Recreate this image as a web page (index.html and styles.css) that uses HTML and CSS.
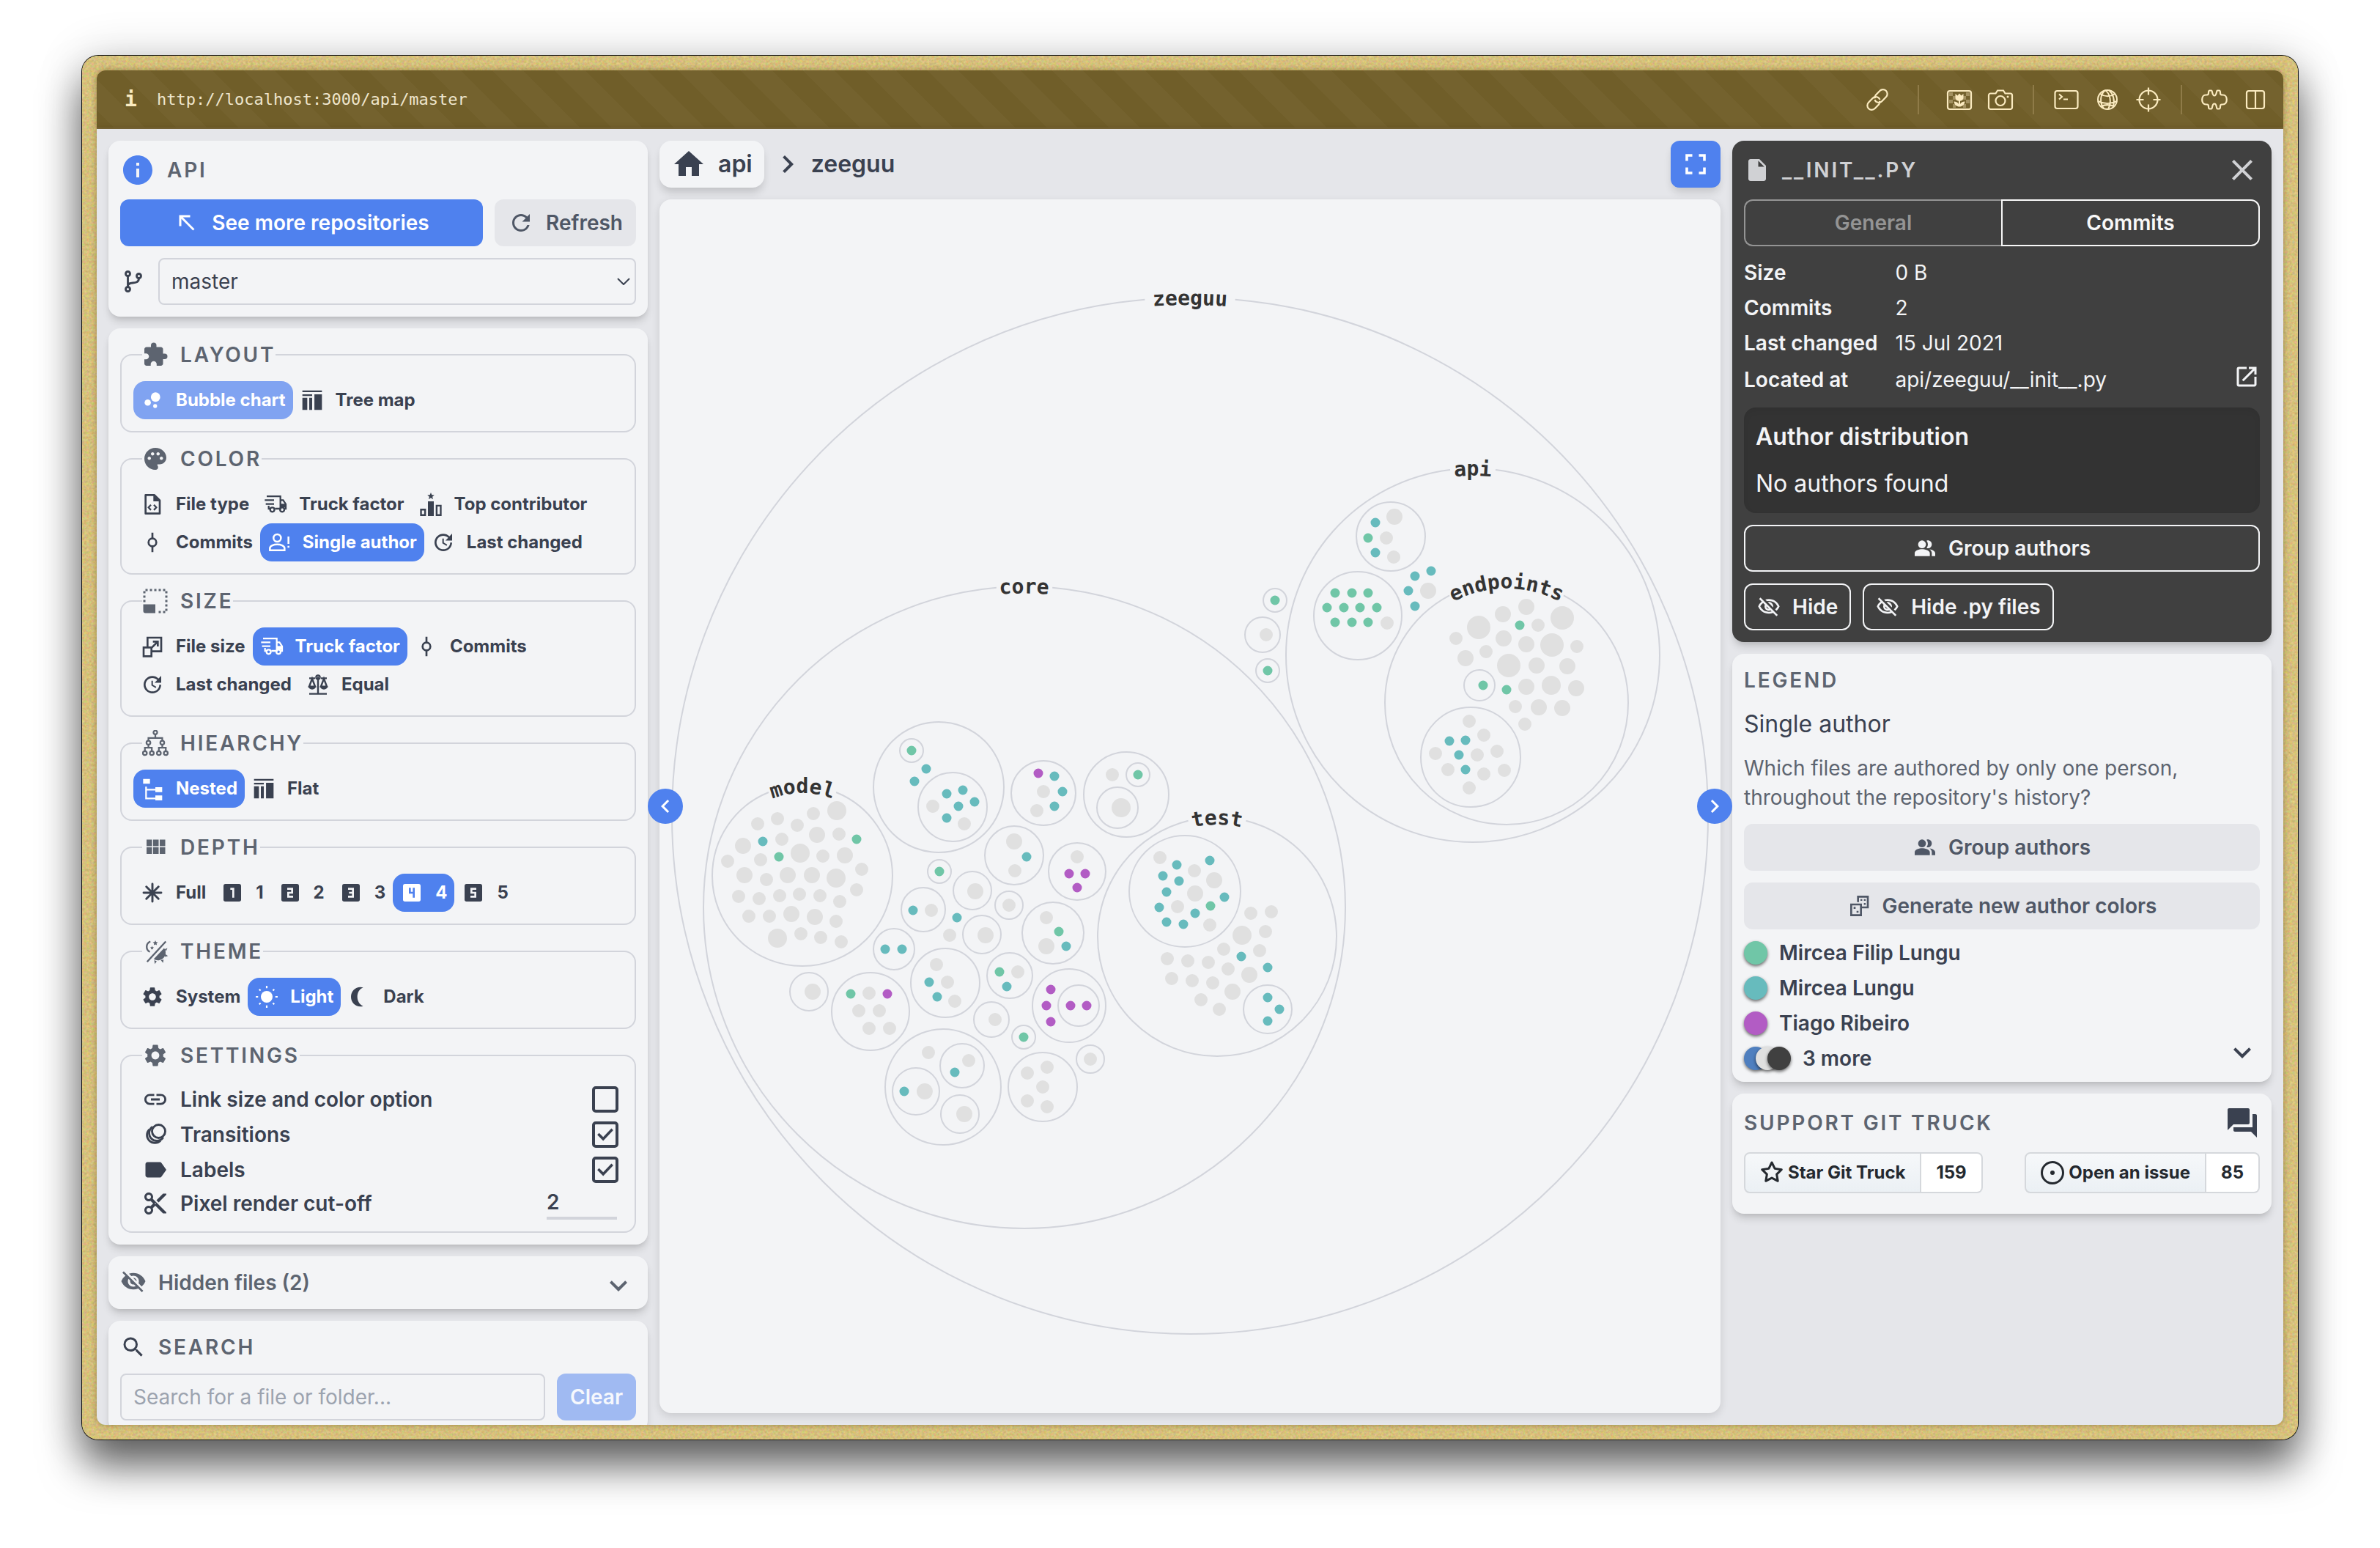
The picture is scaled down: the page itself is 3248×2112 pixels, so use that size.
FILE: index.html
```html
<!DOCTYPE html>
<html lang="en">
<head>
<meta charset="utf-8">
<meta name="viewport" content="width=device-width, initial-scale=1">
<title>Git Truck</title>
<link rel="stylesheet" href="styles.css">
</head>
<body>
<svg class="sprite" aria-hidden="true">
  <defs>
    <filter id="grain" x="0" y="0" width="100%" height="100%" color-interpolation-filters="sRGB">
      <feTurbulence type="fractalNoise" baseFrequency="0.3" numOctaves="3" seed="4"/>
      <feColorMatrix values="0.24 0 0 0 0.72  0 0.24 0 0 0.635  0 0 0.24 0 0.365  0 0 0 0 1"/>
      <feComposite in2="SourceAlpha" operator="in"/>
    </filter>
  </defs>
  <symbol id="info" viewBox="0 0 24 24"><path d="M12 2C6.48 2 2 6.48 2 12s4.48 10 10 10 10-4.48 10-10S17.52 2 12 2zm1 15h-2v-6h2v6zm0-8h-2V7h2v2z"/></symbol>
  <symbol id="up-left" viewBox="0 0 24 24"><path d="M19 17.59 17.59 19 7 8.41V15H5V5h10v2H8.41z"/></symbol>
  <symbol id="refresh" viewBox="0 0 24 24"><path d="M17.65 6.35A7.958 7.958 0 0 0 12 4c-4.42 0-7.99 3.58-7.99 8s3.57 8 7.99 8c3.73 0 6.84-2.55 7.73-6h-2.08A5.99 5.99 0 0 1 12 18c-3.31 0-6-2.69-6-6s2.69-6 6-6c1.66 0 3.14.69 4.22 1.78L13 11h7V4l-2.35 2.35z"/></symbol>
  <symbol id="branch" viewBox="0 0 24 24"><g fill="none" stroke="currentColor" stroke-width="1.9"><circle cx="7" cy="5" r="2"/><circle cx="7" cy="19" r="2"/><circle cx="17" cy="7" r="2"/><path d="M7 7v10M17 9c0 7-10 2-10 7"/></g></symbol>
  <symbol id="puzzle" viewBox="0 0 24 24"><path d="M20.5 11H19V7c0-1.1-.9-2-2-2h-4V3.5a2.5 2.5 0 0 0-5 0V5H4c-1.1 0-1.99.9-1.99 2v3.8H3.5c1.49 0 2.7 1.21 2.7 2.7s-1.21 2.7-2.7 2.7H2V20c0 1.1.9 2 2 2h3.8v-1.5c0-1.49 1.21-2.7 2.7-2.7 1.49 0 2.7 1.21 2.7 2.7V22H17c1.1 0 2-.9 2-2v-4h1.5a2.5 2.5 0 0 0 0-5z"/></symbol>
  <symbol id="bubbles" viewBox="0 0 24 24"><circle cx="7.2" cy="14.4" r="3.2"/><circle cx="14.8" cy="18" r="2"/><circle cx="15.2" cy="8.8" r="4.8"/></symbol>
  <symbol id="treemap" viewBox="0 0 24 24"><path d="M2 2h20v1.8H2zM2 6h10v1.6H2zM2 9.5h5V22H2zM9 9.5h3V22H9zM14.3 6H22v16h-7.700z"/></symbol>
  <symbol id="palette" viewBox="0 0 24 24"><path d="M12 2C6.49 2 2 6.49 2 12s4.49 10 10 10a2.5 2.5 0 0 0 2.5-2.5c0-.61-.23-1.2-.64-1.67a.528.528 0 0 1-.13-.33c0-.28.22-.5.5-.5H16c3.31 0 6-2.69 6-6 0-4.96-4.49-9-10-9zm-5.500 11c-.83 0-1.500-.67-1.500-1.500S5.670 10 6.500 10s1.500.67 1.500 1.500S7.330 13 6.500 13zm3-4C8.670 9 8 8.330 8 7.500S8.670 6 9.500 6s1.500.67 1.500 1.500S10.330 9 9.500 9zm5 0c-.83 0-1.500-.67-1.500-1.500S13.670 6 14.500 6s1.500.67 1.500 1.500S15.330 9 14.500 9zm4.500 2.500c0 .83-.67 1.500-1.500 1.500s-1.500-.67-1.500-1.500.67-1.500 1.500-1.500 1.500.67 1.500 1.500z"/></symbol>
  <symbol id="file-code" viewBox="0 0 24 24"><path fill="none" stroke="currentColor" stroke-width="2" stroke-linejoin="round" d="M5 2.500h9l5.500 5.500v13.500H5z"/><path d="M13 2.500 19.500 9H13z"/><path fill="none" stroke="currentColor" stroke-width="1.700" d="m10.500 12.500-2.500 2.700 2.500 2.700m3-5.400 2.500 2.700-2.500 2.700"/></symbol>
  <symbol id="truck" viewBox="0 0 24 24"><g fill="none" stroke="currentColor" stroke-width="1.700"><path d="M3 3.800h14v12.700h-5.500M1 7.800h9.500M2 11.700h8.500M5 13.500v3h1.500M17 7.800h2.800l2.700 4v4.700h-1.300"/><circle cx="8.700" cy="17.500" r="2.200"/><circle cx="18.800" cy="17.500" r="2.200"/></g><path d="M17 11.500h5.500v3.700H17z"/></symbol>
  <symbol id="podium" viewBox="0 0 24 24"><path d="m12 0 1 2.400 2.600.2-2 1.700.6 2.600L12 5.500 9.800 6.900l.6-2.600-2-1.700 2.600-.2zM9 9h6v15H9zM1 16.500h6V24H1zm1.800 1.800v3.900h2.400v-3.900zM17 12.500h6V24h-6zm1.800 1.800v7.900h2.400v-7.900z" fill-rule="evenodd"/></symbol>
  <symbol id="commit" viewBox="0 0 24 24"><g fill="none" stroke="currentColor" stroke-width="2"><circle cx="12" cy="12" r="4"/><path d="M12 2v6m0 8v6"/></g></symbol>
  <symbol id="person" viewBox="0 0 24 24"><g fill="none" stroke="currentColor" stroke-width="1.900"><circle cx="10" cy="7.500" r="3.800"/><path d="M2.500 20v-2c0-2.600 4-4 7.500-4s7.500 1.400 7.500 4v2z"/><path d="M21.500 6v7.500m0 2v2"/></g></symbol>
  <symbol id="update" viewBox="0 0 24 24"><path d="M21 10.120h-6.780l2.740-2.820c-2.730-2.700-7.150-2.800-9.880-.1-2.730 2.710-2.730 7.080 0 9.790s7.150 2.710 9.880 0C18.320 15.650 19 14.080 19 12.100h2c0 1.980-.88 4.550-2.640 6.290-3.510 3.480-9.210 3.480-12.720 0-3.500-3.470-3.530-9.110-.02-12.580s9.140-3.470 12.650 0L21 3v7.120zM12.500 8v4.250l3.500 2.080-.72 1.210L11 13V8h1.500z"/></symbol>
  <symbol id="resize" viewBox="0 0 24 24"><path fill="none" stroke="currentColor" stroke-width="2" stroke-dasharray="2 2" d="M2 13V2h20v20h-9"/><path d="M1 15h11v8H3a2 2 0 0 1-2-2z"/></symbol>
  <symbol id="scale-up" viewBox="0 0 24 24"><path fill="none" stroke="currentColor" stroke-width="2" d="M7 12V3h14v14h-9M3 13h8v9H3zM11.500 13 17 7.500M12.500 7H17.500v5"/></symbol>
  <symbol id="balance" viewBox="0 0 24 24"><path fill="none" stroke="currentColor" stroke-width="1.800" d="M12 4v17M3 21.500h18M3 5.500h6m6 0h6M6 6 3 14h6zM18 6l-3 8h6z"/><circle cx="12" cy="4.500" r="2" fill="none" stroke="currentColor" stroke-width="1.600"/><path d="M2 13.500h8a4 3.500 0 0 1-8 0zM14 13.500h8a4 3.500 0 0 1-8 0z"/></symbol>
  <symbol id="hierarchy" viewBox="0 0 24 24"><g fill="none" stroke="currentColor" stroke-width="1.500"><circle cx="12" cy="2.200" r="1.700"/><circle cx="5.700" cy="11.500" r="1.800"/><circle cx="18.300" cy="11.500" r="1.800"/><circle cx="2.500" cy="21" r="1.800"/><circle cx="8.800" cy="21" r="1.800"/><circle cx="15.200" cy="21" r="1.800"/><circle cx="21.500" cy="21" r="1.800"/><path d="M12 4v3.200M5.700 9.700V7.200h12.600v2.500M5.700 13.300v2.700M2.500 19v-3h6.300v3M18.300 13.300v2.700M15.200 19v-3h6.300v3"/></g></symbol>
  <symbol id="nested" viewBox="0 0 24 24"><path d="M2.500 2h7v5h-7zM15 10.500h7v5h-7zM15 19h7v5h-7z"/><path fill="none" stroke="currentColor" stroke-width="1.700" d="M5.500 10v12H15M5.500 13H15"/></symbol>
  <symbol id="grid" viewBox="0 0 24 24"><path d="M4 11h5V5H4v6zm0 7h5v-6H4v6zm6 0h5v-6h-5v6zm6 0h5v-6h-5v6zm-6-7h5V5h-5v6zm6-6v6h5V5h-5z"/></symbol>
  <symbol id="asterisk" viewBox="0 0 24 24"><path fill="none" stroke="currentColor" stroke-width="2.200" stroke-linecap="round" d="M12 3v18M3 12h18M5.800 5.800l12.400 12.400M18.200 5.800 5.800 18.200"/></symbol>
  <symbol id="box" viewBox="0 0 24 24"><rect x="3" y="3" width="18" height="18" rx="2"/></symbol>
  <symbol id="theme" viewBox="0 0 24 24"><path fill="none" stroke="currentColor" stroke-width="1.600" d="m4.500 21.500 17-18.500M7.500 3a5.200 5.200 0 0 0-.5 9.500"/><path d="m12 2 .7 1.500 1.600.2-1.200 1.100.3 1.600L12 5.600l-1.400.8.3-1.600-1.200-1.100 1.600-.2zM9 7l.5 1.100 1.200.2-.9.800.2 1.200L9 9.700l-1 .6.2-1.200-.9-.8 1.200-.2zM20 9a7 7 0 0 1-9.500 10zM20.500 10l2.500-1-1.200 2.700zM21 14.500l2.500 1.700-2.700.8zM17 20l2 2.500.5-3zM11 20l.5 3.500 1.800-2.500z"/></symbol>
  <symbol id="gear" viewBox="0 0 24 24"><path d="M19.140 12.940c.04-.3.06-.61.06-.94 0-.32-.02-.64-.07-.94l2.030-1.580a.49.49 0 0 0 .12-.61l-1.920-3.320a.488.488 0 0 0-.59-.22l-2.390.96c-.5-.38-1.030-.7-1.620-.94l-.36-2.540a.484.484 0 0 0-.48-.41h-3.840c-.24 0-.43.17-.47.41l-.36 2.540c-.59.24-1.130.57-1.620.94l-2.390-.96c-.22-.08-.47 0-.59.22L2.740 8.870c-.12.21-.08.47.12.61l2.030 1.580c-.05.3-.09.63-.09.94s.02.64.07.94l-2.030 1.580a.49.49 0 0 0-.12.61l1.920 3.320c.12.22.37.29.59.22l2.390-.96c.5.38 1.030.7 1.620.94l.36 2.540c.05.24.24.41.48.41h3.840c.24 0 .44-.17.47-.41l.36-2.540c.59-.24 1.130-.56 1.620-.94l2.390.96c.22.08.47 0 .59-.22l1.920-3.320c.12-.22.07-.47-.12-.61l-2.010-1.580zM12 15.600c-1.980 0-3.600-1.620-3.600-3.600s1.620-3.600 3.600-3.600 3.600 1.620 3.600 3.600-1.620 3.600-3.600 3.600z"/></symbol>
  <symbol id="sun" viewBox="0 0 24 24"><circle cx="12" cy="12" r="6"/><path fill="none" stroke="currentColor" stroke-width="1.600" d="M12 .8v2.400m0 17.600v2.400M.8 12h2.400m17.600 0h2.400M4.300 4.300l1.400 1.400m12.600 12.600 1.400 1.400m0-15.400-1.400 1.400M5.700 18.300l-1.400 1.400"/></symbol>
  <symbol id="moon" viewBox="0 0 24 24"><path d="M15.500 2.500C9 .500 3 5.500 3 12s6 11.500 12.500 9.500C11.500 20 9.500 16 9.500 12s2-8 6-9.500z"/></symbol>
  <symbol id="link" viewBox="0 0 24 24"><path d="M3.900 12c0-1.710 1.390-3.100 3.100-3.100h4V7H7c-2.760 0-5 2.240-5 5s2.240 5 5 5h4v-1.900H7c-1.710 0-3.100-1.390-3.100-3.100zM8 13h8v-2H8v2zm9-6h-4v1.900h4c1.710 0 3.100 1.390 3.100 3.100s-1.390 3.100-3.100 3.100h-4V17h4c2.760 0 5-2.240 5-5s-2.240-5-5-5z"/></symbol>
  <symbol id="animation" viewBox="0 0 24 24"><g fill="none" stroke="currentColor" stroke-width="1.900"><circle cx="15" cy="9" r="6"/><path d="M9.500 4.800a7 7 0 1 0 9.700 9.700"/><path d="M6.500 7.300a7 7 0 1 0 10.200 10.200"/></g></symbol>
  <symbol id="label" viewBox="0 0 24 24"><path d="M17.630 5.840C17.270 5.330 16.670 5 16 5L5 5.010C3.900 5.010 3 5.900 3 7v10c0 1.100.9 1.990 2 1.990L16 19c.67 0 1.270-.33 1.630-.84L22 12l-4.370-6.160z"/></symbol>
  <symbol id="cut" viewBox="0 0 24 24"><path d="M9.640 7.640c.23-.5.36-1.050.36-1.640 0-2.210-1.790-4-4-4S2 3.790 2 6s1.790 4 4 4c.59 0 1.140-.13 1.640-.36L10 12l-2.360 2.360C7.140 14.130 6.590 14 6 14c-2.210 0-4 1.790-4 4s1.790 4 4 4 4-1.790 4-4c0-.59-.13-1.140-.36-1.640L12 14l7 7h3v-1L9.640 7.640zM6 8c-1.100 0-2-.89-2-2s.9-2 2-2 2 .89 2 2-.9 2-2 2zm0 12c-1.100 0-2-.89-2-2s.9-2 2-2 2 .89 2 2-.9 2-2 2zm6-7.500c-.28 0-.5-.22-.5-.5s.22-.5.5-.5.5.22.5.5-.22.5-.5.5zM19 3l-6 6 2 2 7-7V3z"/></symbol>
  <symbol id="eye-off" viewBox="0 0 24 24"><path d="M12 7c2.760 0 5 2.240 5 5 0 .65-.13 1.260-.36 1.830l2.920 2.920c1.510-1.260 2.700-2.890 3.430-4.750-1.730-4.390-6-7.500-11-7.500-1.400 0-2.740.25-3.980.7l2.160 2.160C10.740 7.130 11.350 7 12 7zM2 4.270l2.280 2.280.46.46A11.804 11.804 0 0 0 1 12c1.730 4.390 6 7.500 11 7.500 1.550 0 3.030-.3 4.380-.84l.42.42L19.730 22 21 20.730 3.270 3 2 4.270zM7.530 9.800l1.550 1.550c-.05.21-.08.43-.08.65 0 1.660 1.340 3 3 3 .22 0 .44-.03.65-.08l1.550 1.550c-.67.33-1.410.53-2.200.53-2.760 0-5-2.240-5-5 0-.79.2-1.530.53-2.200zm4.310-.78 3.150 3.150.02-.16c0-1.660-1.340-3-3-3l-.17.01z"/></symbol>
  <symbol id="eye-off-outline" viewBox="0 0 24 24"><path d="M12 6a9.770 9.770 0 0 1 8.820 5.500 9.647 9.647 0 0 1-2.410 3.120l1.410 1.410c1.390-1.230 2.490-2.770 3.180-4.530C21.270 7.110 17 4 12 4c-1.270 0-2.490.2-3.640.57l1.650 1.650C10.660 6.090 11.320 6 12 6zm-1.070 1.140L13 9.210c.57.25 1.030.71 1.280 1.280l2.070 2.070c.08-.34.14-.7.14-1.070C16.500 9.010 14.480 7 12 7c-.37 0-.72.05-1.070.14zM2.010 3.870l2.680 2.680A11.738 11.738 0 0 0 1 11.500C2.730 15.890 7 19 12 19c1.520 0 2.980-.29 4.320-.82l3.420 3.420 1.410-1.410L3.420 2.450 2.010 3.870zm7.500 7.500 2.610 2.610c-.04.01-.08.02-.12.02a2.500 2.500 0 0 1-2.500-2.500c0-.05.01-.08.01-.13zm-3.400-3.400 1.750 1.750a4.600 4.600 0 0 0-.36 1.780 4.507 4.507 0 0 0 6.270 4.140l.98.98c-.88.24-1.800.38-2.750.38a9.770 9.770 0 0 1-8.820-5.500c.7-1.430 1.720-2.610 2.930-3.530z"/></symbol>
  <symbol id="expand" viewBox="0 0 24 24"><path d="M16.590 8.590 12 13.170 7.410 8.590 6 10l6 6 6-6z"/></symbol>
  <symbol id="search" viewBox="0 0 24 24"><path d="M15.500 14h-.79l-.28-.27A6.471 6.471 0 0 0 16 9.500 6.500 6.500 0 1 0 9.500 16c1.610 0 3.090-.59 4.230-1.570l.27.28v.79l5 4.990L20.490 19l-4.990-5zm-6 0C7.010 14 5 11.990 5 9.500S7.010 5 9.500 5 14 7.010 14 9.500 11.990 14 9.500 14z"/></symbol>
  <symbol id="home" viewBox="0 0 24 24"><path d="M10 20v-6h4v6h5v-8h3L12 3 2 12h3v8z"/></symbol>
  <symbol id="next" viewBox="0 0 24 24"><path d="M10 6 8.590 7.410 13.170 12l-4.580 4.590L10 18l6-6z"/></symbol>
  <symbol id="prev" viewBox="0 0 24 24"><path d="M15.410 7.410 14 6l-6 6 6 6 1.410-1.410L10.830 12z"/></symbol>
  <symbol id="fullscreen" viewBox="0 0 24 24"><path fill="none" stroke="currentColor" stroke-width="2.400" d="M4 9V4h5m6 0h5v5m0 6v5h-5m-6 0H4v-5"/></symbol>
  <symbol id="file" viewBox="0 0 24 24"><path d="M6 2c-1.100 0-1.990.9-1.990 2L4 20c0 1.100.89 2 1.990 2H18c1.100 0 2-.9 2-2V8l-6-6H6zm7 7V3.500L18.500 9H13z"/></symbol>
  <symbol id="close" viewBox="0 0 24 24"><path d="M19 6.410 17.590 5 12 10.590 6.410 5 5 6.410 10.590 12 5 17.590 6.410 19 12 13.410 17.590 19 19 17.590 13.410 12z"/></symbol>
  <symbol id="open" viewBox="0 0 24 24"><path d="M19 19H5V5h7V3H5a2 2 0 0 0-2 2v14a2 2 0 0 0 2 2h14c1.100 0 2-.9 2-2v-7h-2v7zM14 3v2h3.590l-9.830 9.830 1.410 1.410L19 6.410V10h2V3h-7z"/></symbol>
  <symbol id="people" viewBox="0 0 24 24"><path d="M16.670 13.130C18.040 14.060 19 15.320 19 17v3h3.500v-3c0-2.180-3.070-3.470-5.830-3.870zM15 12c2.210 0 4-1.790 4-4s-1.790-4-4-4c-.47 0-.91.1-1.330.24a5.980 5.980 0 0 1 0 7.520c.42.14.86.24 1.330.24zM9 13c-2.670 0-7.500 1.340-7.500 4v3H17v-3c0-2.660-5.330-4-8-4z"/><circle cx="9" cy="8" r="4"/></symbol>
  <symbol id="dice" viewBox="0 0 24 24"><path fill="none" stroke="currentColor" stroke-width="2" d="M11 8V2.500h10v11h-6M4 10.500h10v11H4z"/><path d="M13.500 5h1.800v1.800h-1.800zM17 5h1.800v1.800H17zM17 9h1.800v1.800H17zM6.500 13h2v2h-2zM9.500 17h2v2h-2z"/></symbol>
  <symbol id="forum" viewBox="0 0 24 24"><path d="M21 6h-2v9H6v2c0 .55.45 1 1 1h11l4 4V7c0-.55-.45-1-1-1zm-4 6V3c0-.55-.45-1-1-1H3c-.55 0-1 .45-1 1v14l4-4h10c.55 0 1-.45 1-1z"/></symbol>
  <symbol id="star" viewBox="0 0 16 16"><path d="M8 .25a.75.75 0 0 1 .673.418l1.882 3.815 4.210.612a.75.75 0 0 1 .416 1.279l-3.046 2.970.719 4.192a.75.75 0 0 1-1.088.791L8 12.347l-3.766 1.980a.75.75 0 0 1-1.088-.79l.72-4.194L.818 6.374a.75.75 0 0 1 .416-1.280l4.210-.611L7.327.668A.75.75 0 0 1 8 .25zm0 2.445L6.615 5.500a.75.75 0 0 1-.564.41l-3.097.45 2.240 2.184a.75.75 0 0 1 .216.664l-.528 3.084 2.769-1.456a.75.75 0 0 1 .698 0l2.770 1.456-.53-3.084a.75.75 0 0 1 .216-.664l2.240-2.183-3.096-.45a.75.75 0 0 1-.564-.41z"/></symbol>
  <symbol id="issue" viewBox="0 0 16 16"><circle cx="8" cy="8" r="7.250" fill="none" stroke="currentColor" stroke-width="1.500"/><circle cx="8" cy="8" r="1.500"/></symbol>
  <symbol id="t-link" viewBox="0 0 36 36"><g fill="none" stroke="currentColor" stroke-width="2.200" transform="rotate(-46 18 18)"><path d="M19 21.500a6 6 0 0 1-4 2.500H7a6 6 0 0 1 0-12h8a6 6 0 0 1 5.500 8.500"/><path d="M17 14.500a6 6 0 0 1 4-2.500h8a6 6 0 0 1 0 12h-8a6 6 0 0 1-5.500-8.500"/></g></symbol>
  <symbol id="t-flower" viewBox="0 0 36 36"><rect x="2" y="6" width="32" height="25" rx="3" fill="none" stroke="currentColor" stroke-width="2.200"/><path opacity=".35" d="M4 8h5v5H4zM27 8h5v5h-5zM4 18h5v5H4zM27 18h5v5h-5zM9 13h4v5H9zM23 13h4v5h-4zM9 24h4v5H9zM23 24h4v5h-4z"/><path d="M12.500 10l3 2.500L18 9.500l2.500 3 3-2.500v5c0 3-2 4.500-4.500 4.700V24c1-2 3.500-3.500 6.500-3.500-.5 4.500-4 7-7.500 7s-7-2.500-7.500-7c3 0 5.500 1.500 6.500 3.500v-4.300c-2.500-.2-4.500-1.700-4.500-4.700z"/></symbol>
  <symbol id="t-camera" viewBox="0 0 36 36"><g fill="none" stroke="currentColor" stroke-width="2.200"><path d="M4.500 9.500h7l2.500-4h8l2.500 4h7a2.500 2.500 0 0 1 2.500 2.500v16.500a2.500 2.500 0 0 1-2.500 2.500h-27A2.500 2.500 0 0 1 2 28.500V12a2.500 2.500 0 0 1 2.500-2.500z"/><circle cx="18" cy="19.500" r="6.500"/></g><circle cx="28" cy="14" r="1.500"/></symbol>
  <symbol id="t-terminal" viewBox="0 0 36 36"><g fill="none" stroke="currentColor" stroke-width="2.200"><rect x="2.500" y="6" width="31" height="24" rx="3"/><path d="m8 10.500 4 3.500-4 3.500m6 0h6"/></g></symbol>
  <symbol id="t-globe" viewBox="0 0 36 36"><g fill="none" stroke="currentColor" stroke-width="2"><circle cx="18" cy="18" r="13"/><path d="M15 5c7 5 9 16 4 26M15 5C8 11 7 22 13 30M20 5c7 6 8 14 6 23M7.500 10c7 4 15 4 21 0M5 20c8 4 18 4 26 0M9 27c6-2.500 12-2.500 18 0"/></g></symbol>
  <symbol id="t-target" viewBox="0 0 36 36"><g fill="none" stroke="currentColor" stroke-width="2.200"><circle cx="18" cy="18" r="12.500"/><path d="M18 1.500v10m0 13v10M1.500 18h10m13 0h10"/></g></symbol>
  <symbol id="t-puzzle" viewBox="0 0 36 36"><path fill="none" stroke="currentColor" stroke-width="2.200" stroke-linejoin="round" d="M11.500 5.500H14c1.500 0 .5 7 4 7s2.500-7 4-7h2.500c1.500 0 1.500 1.500 1.500 3s.5 3 2 3h1.500c3.500 0 5.300 3 5.300 6.500s-1.800 6.500-5.300 6.500H28c-1.500 0-2 1.500-2 3s0 3-1.500 3H22c-1.500 0-.5-7-4-7s-2.500 7-4 7h-2.500c-1.500 0-1.500-1.500-1.500-3s-.5-3-2-3H6.500c-3.500 0-5.300-3-5.300-6.500s1.800-6.500 5.300-6.500H8c1.500 0 2-1.500 2-3s0-3 1.500-3z"/></symbol>
  <symbol id="t-split" viewBox="0 0 36 36"><g fill="none" stroke="currentColor" stroke-width="2.200"><rect x="6" y="6" width="24" height="24" rx="3"/><path d="M18 6v24"/></g></symbol>
</svg>

<div class="window">
  <header class="toolbar">
    <span class="toolbar-info">i</span>
    <span class="toolbar-url">http://localhost:3000/api/master</span>
    <nav class="toolbar-tools" aria-label="Browser tools">
      <button class="tool" type="button" aria-label="Copy link"><svg class="icon"><use href="#t-link"/></svg></button>
      <span class="tool-sep tool-sep-wide"></span>
      <button class="tool" type="button" aria-label="Image"><svg class="icon"><use href="#t-flower"/></svg></button>
      <button class="tool" type="button" aria-label="Screenshot"><svg class="icon"><use href="#t-camera"/></svg></button>
      <span class="tool-sep"></span>
      <button class="tool" type="button" aria-label="Console"><svg class="icon"><use href="#t-terminal"/></svg></button>
      <button class="tool" type="button" aria-label="Network"><svg class="icon"><use href="#t-globe"/></svg></button>
      <button class="tool" type="button" aria-label="Inspect"><svg class="icon"><use href="#t-target"/></svg></button>
      <span class="tool-sep"></span>
      <button class="tool" type="button" aria-label="Extensions"><svg class="icon"><use href="#t-puzzle"/></svg></button>
      <button class="tool" type="button" aria-label="Split view"><svg class="icon"><use href="#t-split"/></svg></button>
    </nav>
  </header>

  <div class="app">
    <aside class="panel">
      <section class="card">
        <div class="card-head tall">
          <svg class="icon icon-lg accent"><use href="#info"/></svg>
          <h2 class="title">API</h2>
        </div>
        <div class="row">
          <a class="btn btn-primary grow" href="#"><svg class="icon"><use href="#up-left"/></svg>See more repositories</a>
          <button class="btn btn-soft" type="button"><svg class="icon"><use href="#refresh"/></svg>Refresh</button>
        </div>
        <div class="row">
          <label class="branch-label" for="branch" aria-label="Branch"><svg class="icon"><use href="#branch"/></svg></label>
          <div class="select-wrap">
            <select class="field select" id="branch"><option>master</option></select>
            <svg class="select-arrow" viewBox="0 0 18 10"><path d="m1 1 8 8 8-8"/></svg>
          </div>
        </div>
      </section>

      <section class="card">
        <fieldset class="group">
          <legend class="title legend"><svg class="icon"><use href="#puzzle"/></svg>Layout</legend>
          <div class="options">
            <button class="option active faded" type="button"><svg class="icon icon-sm"><use href="#bubbles"/></svg>Bubble chart</button>
            <button class="option" type="button"><svg class="icon icon-sm"><use href="#treemap"/></svg>Tree map</button>
          </div>
        </fieldset>
        <fieldset class="group">
          <legend class="title legend"><svg class="icon"><use href="#palette"/></svg>Color</legend>
          <div class="options">
            <button class="option" type="button"><svg class="icon icon-sm"><use href="#file-code"/></svg>File type</button>
            <button class="option" type="button"><svg class="icon icon-sm"><use href="#truck"/></svg>Truck factor</button>
            <button class="option" type="button"><svg class="icon icon-sm"><use href="#podium"/></svg>Top contributor</button>
            <button class="option" type="button"><svg class="icon icon-sm"><use href="#commit"/></svg>Commits</button>
            <button class="option active" type="button"><svg class="icon icon-sm"><use href="#person"/></svg>Single author</button>
            <button class="option" type="button"><svg class="icon icon-sm"><use href="#update"/></svg>Last changed</button>
          </div>
        </fieldset>
        <fieldset class="group">
          <legend class="title legend"><svg class="icon"><use href="#resize"/></svg>Size</legend>
          <div class="options">
            <button class="option" type="button"><svg class="icon icon-sm"><use href="#scale-up"/></svg>File size</button>
            <button class="option active" type="button"><svg class="icon icon-sm"><use href="#truck"/></svg>Truck factor</button>
            <button class="option" type="button"><svg class="icon icon-sm"><use href="#commit"/></svg>Commits</button>
            <button class="option" type="button"><svg class="icon icon-sm"><use href="#update"/></svg>Last changed</button>
            <button class="option" type="button"><svg class="icon icon-sm"><use href="#balance"/></svg>Equal</button>
          </div>
        </fieldset>
        <fieldset class="group">
          <legend class="title legend"><svg class="icon"><use href="#hierarchy"/></svg>Hiearchy</legend>
          <div class="options">
            <button class="option active" type="button"><svg class="icon icon-sm"><use href="#nested"/></svg>Nested</button>
            <button class="option" type="button"><svg class="icon icon-sm"><use href="#treemap"/></svg>Flat</button>
          </div>
        </fieldset>
        <fieldset class="group">
          <legend class="title legend"><svg class="icon"><use href="#grid"/></svg>Depth</legend>
          <div class="options">
            <button class="option" type="button"><svg class="icon icon-sm"><use href="#asterisk"/></svg>Full</button>
            <button class="option" type="button"><svg class="icon icon-sm" viewBox="0 0 24 24"><use href="#box"/><path class="mark" d="M10 8h3v9"/></svg>1</button>
            <button class="option" type="button"><svg class="icon icon-sm" viewBox="0 0 24 24"><use href="#box"/><path class="mark" d="M9 8h5v4h-4v4h5"/></svg>2</button>
            <button class="option" type="button"><svg class="icon icon-sm" viewBox="0 0 24 24"><use href="#box"/><path class="mark" d="M9 8h5v8H9m1-4h4"/></svg>3</button>
            <button class="option active" type="button"><svg class="icon icon-sm" viewBox="0 0 24 24"><use href="#box"/><path class="mark" d="M10 7v5h4m0-5v10"/></svg>4</button>
            <button class="option" type="button"><svg class="icon icon-sm" viewBox="0 0 24 24"><use href="#box"/><path class="mark" d="M15 8h-5v4h4v4H9"/></svg>5</button>
          </div>
        </fieldset>
        <fieldset class="group">
          <legend class="title legend"><svg class="icon"><use href="#theme"/></svg>Theme</legend>
          <div class="options">
            <button class="option" type="button"><svg class="icon icon-sm"><use href="#gear"/></svg>System</button>
            <button class="option active" type="button"><svg class="icon icon-sm"><use href="#sun"/></svg>Light</button>
            <button class="option" type="button"><svg class="icon icon-sm"><use href="#moon"/></svg>Dark</button>
          </div>
        </fieldset>
        <fieldset class="group">
          <legend class="title legend"><svg class="icon"><use href="#gear"/></svg>Settings</legend>
          <label class="setting"><svg class="icon"><use href="#link"/></svg>Link size and color option<input class="check" type="checkbox"></label>
          <label class="setting"><svg class="icon"><use href="#animation"/></svg>Transitions<input class="check" type="checkbox" checked></label>
          <label class="setting"><svg class="icon"><use href="#label"/></svg>Labels<input class="check" type="checkbox" checked></label>
          <label class="setting"><svg class="icon"><use href="#cut"/></svg>Pixel render cut-off<input class="cutoff" type="text" inputmode="numeric" value="2"></label>
        </fieldset>
      </section>

      <section class="card">
        <button class="disclosure" type="button"><svg class="icon"><use href="#eye-off"/></svg>Hidden files (2)<svg class="icon icon-lg push"><use href="#expand"/></svg></button>
      </section>

      <section class="card">
        <div class="card-head"><svg class="icon"><use href="#search"/></svg><h2 class="title">Search</h2></div>
        <div class="row">
          <input class="field grow" type="text" placeholder="Search for a file or folder..." aria-label="Search for a file or folder">
          <button class="btn btn-primary btn-disabled" type="button">Clear</button>
        </div>
      </section>
    </aside>

    <main class="stage">
      <div class="crumbs">
        <a class="crumb-home" href="#"><svg class="icon icon-lg"><use href="#home"/></svg>api</a>
        <svg class="icon icon-lg"><use href="#next"/></svg>
        <span class="crumb">zeeguu</span>
        <button class="btn btn-primary btn-square push" type="button" aria-label="Full screen"><svg class="icon"><use href="#fullscreen"/></svg></button>
      </div>
      <div class="chart-card">
        <svg class="chart" viewBox="0 0 1448 1656" role="img" aria-label="Bubble chart of the zeeguu folder">
          <defs>
            <path id="arc-zeeguu" d="M27 841a697 697 0 0 1 1394 0"/>
            <path id="arc-core" d="M69 966a428 428 0 0 1 857 0"/>
            <path id="arc-api" d="M865 622a245 245 0 0 1 490 0"/>
            <path id="arc-endpoints" d="M1000 687a156 156 0 0 1 312 0"/>
            <path id="arc-model" d="M82 923a113 113 0 0 1 226 0"/>
            <path id="arc-test" d="M608 1006a153 153 0 0 1 306 0"/>
          </defs>
          <g class="ring">
            <!-- Named folders: the dashes are in degrees and leave a gap at the top for the name -->
            <circle cx="724" cy="841" r="707" pathLength="360" stroke-dasharray="265 10 85 0"/>
            <circle cx="498" cy="966" r="438" pathLength="360" stroke-dasharray="265 10 85 0"/>
            <circle cx="1110" cy="622" r="255" pathLength="360" stroke-dasharray="263 14 83 0"/>
            <circle cx="1156" cy="687" r="166" pathLength="360" stroke-dasharray="242 56 62 0"/>
            <circle cx="195" cy="923" r="123" pathLength="360" stroke-dasharray="248 44 68 0"/>
            <circle cx="761" cy="1006" r="163" pathLength="360" stroke-dasharray="256 28 76 0"/>
            <circle cx="998" cy="460" r="47"/>
            <circle cx="953" cy="568" r="60"/>
            <circle cx="840" cy="547" r="16"/>
            <circle cx="823" cy="594" r="24"/>
            <circle cx="830" cy="643" r="16"/>
            <circle cx="1119" cy="663" r="21"/>
            <circle cx="1107" cy="761" r="68"/>
            <circle cx="381" cy="802" r="89"/>
            <circle cx="344" cy="752" r="16"/>
            <circle cx="400" cy="829" r="47"/>
            <circle cx="524" cy="810" r="44"/>
            <circle cx="637" cy="812" r="58"/>
            <circle cx="625" cy="830" r="28"/>
            <circle cx="653" cy="785" r="16"/>
            <circle cx="484" cy="895" r="40"/>
            <circle cx="570" cy="917" r="39"/>
            <circle cx="382" cy="917" r="16"/>
            <circle cx="427" cy="943" r="26"/>
            <circle cx="360" cy="969" r="30"/>
            <circle cx="477" cy="963" r="19"/>
            <circle cx="440" cy="1003" r="26"/>
            <circle cx="537" cy="1001" r="42"/>
            <circle cx="320" cy="1023" r="28"/>
            <circle cx="390" cy="1069" r="47"/>
            <circle cx="478" cy="1059" r="31"/>
            <circle cx="559" cy="1100" r="50"/>
            <circle cx="572" cy="1100" r="28"/>
            <circle cx="204" cy="1081" r="26"/>
            <circle cx="288" cy="1108" r="53"/>
            <circle cx="453" cy="1119" r="24"/>
            <circle cx="497" cy="1143" r="16"/>
            <circle cx="588" cy="1173" r="19"/>
            <circle cx="523" cy="1211" r="47"/>
            <circle cx="387" cy="1211" r="79"/>
            <circle cx="413" cy="1182" r="30"/>
            <circle cx="350" cy="1217" r="32"/>
            <circle cx="410" cy="1248" r="26"/>
            <circle cx="717" cy="944" r="76"/>
            <circle cx="830" cy="1105" r="33"/>
          </g>
          <g class="dots none">
            <path class="d18" d="M134 852h0M161 845h0M188 854h0M210 838h0M167 873h0M245 866h0M93 903h0M138 901h0M223 896h0M276 914h0M146 928h0M269 942h0M108 951h0M136 954h0M164 950h0M191 948h0M219 950h0M246 958h0M122 978h0M150 978h0M241 985h0M193 1002h0M220 1007h0M248 1013h0M373 828h0M416 852h0M524 808h0M515 834h0M618 785h0M485 916h0M570 897h0M371 970h0M477 963h0M396 1004h0M528 980h0M378 1044h0M393 1068h0M403 1094h0M489 1054h0M286 1083h0M272 1107h0M300 1107h0M286 1131h0M314 1131h0M458 1119h0M367 1164h0M422 1175h0M588 1173h0M502 1192h0M529 1184h0M523 1211h0M502 1230h0M529 1238h0M683 898h0M730 916h0M707 965h0M751 990h0M807 974h0M835 972h0M827 999h0M770 1023h0M819 1025h0M693 1036h0M721 1039h0M749 1041h0M776 1050h0M699 1063h0M727 1066h0M755 1069h0M739 1092h0M764 1105h0M992 462h0M1002 488h0M993 578h0M828 594h0M1087 599h0M1128 617h0M1199 581h0M1252 610h0M1168 692h0M1181 716h0M1105 712h0M1125 731h0M1143 753h0M1059 756h0M1116 758h0M1076 778h0M1125 784h0M1153 779h0M1105 803h0"/>
            <path class="d22" d="M114 882h0M215 867h0M253 895h0M116 922h0M175 922h0M208 922h0M180 975h0M212 979h0M484 876h0M431 944h0M445 1004h0M528 1019h0M209 1081h0M362 1217h0M416 1248h0M757 929h0M731 947h0M805 1058h0M782 1081h0M1003 433h0M1049 534h0M1151 566h0M1183 556h0M1152 599h0M1100 626h0M1183 607h0M1197 636h0M1239 637h0M1183 665h0M1251 667h0M1200 693h0M1232 694h0"/>
            <path class="d26" d="M242 834h0M192 892h0M241 926h0M161 1008h0M795 1004h0M630 830h0M1217 663h0"/>
            <path class="d32" d="M1218 608h0M1118 584h0M1232 571h0M1159 636h0"/>
          </g>
          <path class="dots d13 teal" d="M141 876h0M364 777h0M348 794h0M392 811h0M414 806h0M430 822h0M408 828h0M392 844h0M539 787h0M550 808h0M539 828h0M501 897h0M346 970h0M406 980h0M555 1019h0M308 1023h0M331 1023h0M368 1068h0M379 1088h0M474 1074h0M403 1191h0M334 1217h0M706 908h0M751 902h0M687 923h0M709 930h0M692 945h0M682 966h0M771 952h0M731 974h0M692 986h0M715 989h0M794 1033h0M830 1048h0M830 1089h0M846 1105h0M830 1121h0M977 441h0M977 482h0M1031 514h0M1053 507h0M1022 534h0M1031 555h0M1078 739h0M1100 738h0M1091 758h0M1100 778h0"/>
          <path class="dots d13 green" d="M163 897h0M269 873h0M344 752h0M382 917h0M545 999h0M464 1054h0M261 1084h0M497 1143h0M653 785h0M752 964h0M967 462h0M922 537h0M945 537h0M967 537h0M911 557h0M934 557h0M956 557h0M979 557h0M922 577h0M945 577h0M967 577h0M840 547h0M830 643h0M1174 581h0M1124 663h0M1156 669h0"/>
          <path class="dots d13 purple" d="M517 783h0M559 920h0M581 920h0M570 939h0M311 1084h0M534 1078h0M528 1100h0M534 1122h0M561 1100h0M583 1100h0"/>
          <g class="folder-names">
            <text><textPath href="#arc-zeeguu" startOffset="50%">zeeguu</textPath></text>
            <text><textPath href="#arc-core" startOffset="50%">core</textPath></text>
            <text><textPath href="#arc-api" startOffset="50%">api</textPath></text>
            <text><textPath href="#arc-endpoints" startOffset="50%">endpoints</textPath></text>
            <text><textPath href="#arc-model" startOffset="50%">model</textPath></text>
            <text><textPath href="#arc-test" startOffset="50%">test</textPath></text>
          </g>
        </svg>
        <button class="handle handle-left" type="button" aria-label="Hide left panel"><svg class="icon"><use href="#prev"/></svg></button>
        <button class="handle handle-right" type="button" aria-label="Hide right panel"><svg class="icon"><use href="#next"/></svg></button>
      </div>
    </main>

    <aside class="panel">
      <section class="card card-dark">
        <div class="card-head tall">
          <svg class="icon"><use href="#file"/></svg>
          <h2 class="title">__init__.py</h2>
          <button class="plain push" type="button" aria-label="Close"><svg class="icon icon-lg"><use href="#close"/></svg></button>
        </div>
        <div class="tabs">
          <button class="tab" type="button">General</button>
          <button class="tab tab-on" type="button">Commits</button>
        </div>
        <dl class="facts">
          <dt>Size</dt><dd>0 B</dd>
          <dt>Commits</dt><dd>2</dd>
          <dt>Last changed</dt><dd>15 Jul 2021</dd>
          <dt class="fact-tall">Located at</dt><dd class="fact-tall">api/zeeguu/__init__.py<a class="open-link" href="#" aria-label="Open file"><svg class="icon"><use href="#open"/></svg></a></dd>
        </dl>
        <div class="well">
          <h3 class="well-title">Author distribution</h3>
          <p class="body-text">No authors found</p>
        </div>
        <button class="btn btn-outline" type="button"><svg class="icon icon-sm"><use href="#people"/></svg>Group authors</button>
        <div class="row">
          <button class="btn btn-outline" type="button"><svg class="icon icon-sm"><use href="#eye-off-outline"/></svg>Hide</button>
          <button class="btn btn-outline" type="button"><svg class="icon icon-sm"><use href="#eye-off-outline"/></svg>Hide .py files</button>
        </div>
      </section>

      <section class="card">
        <h2 class="title">Legend</h2>
        <h3 class="body-text">Single author</h3>
        <p class="muted">Which files are authored by only one person, throughout the repository's history?</p>
        <button class="btn btn-soft" type="button"><svg class="icon icon-sm"><use href="#people"/></svg>Group authors</button>
        <button class="btn btn-soft" type="button"><svg class="icon icon-sm"><use href="#dice"/></svg>Generate new author colors</button>
        <div class="author"><span class="swatch green-bg"></span>Mircea Filip Lungu</div>
        <div class="author"><span class="swatch teal-bg"></span>Mircea Lungu</div>
        <div class="author"><span class="swatch purple-bg"></span>Tiago Ribeiro</div>
        <button class="author more" type="button"><span class="swatches"><span class="swatch blue-bg"></span><span class="swatch none-bg"></span><span class="swatch dark-bg"></span></span>3 more<svg class="icon icon-lg push"><use href="#expand"/></svg></button>
      </section>

      <section class="card support">
        <div class="card-head tall"><h2 class="title">Support Git Truck</h2><a class="plain push" href="#" aria-label="Discussions"><svg class="icon icon-lg"><use href="#forum"/></svg></a></div>
        <div class="row spread">
          <div class="gh"><a class="gh-btn" href="#"><svg class="icon icon-sm"><use href="#star"/></svg>Star Git Truck</a><a class="gh-count" href="#">159</a></div>
          <div class="gh"><a class="gh-btn" href="#"><svg class="icon icon-sm"><use href="#issue"/></svg>Open an issue</a><a class="gh-count" href="#">85</a></div>
        </div>
      </section>
    </aside>
  </div>
</div>
</body>
</html>
```
FILE: styles.css
```css
*, *::before, *::after { box-sizing: border-box; }

:root {
  --accent: #4f81ee;
  --surface: #f3f4f6;
  --base: #e5e6ea;
  --line: #d2d4db;
  --text: #3a4150;
  --soft: #5d6470;
  --green: #70c6a7;
  --teal: #67bbbd;
  --purple: #b25cc4;
  --none: #e0e0e0;
}

body {
  margin: 0;
  height: 100vh;
  padding: 76px 112px 148px;
  overflow: hidden;
  background: #fff;
  color: var(--text);
  font-family: Inter, "Liberation Sans", sans-serif;
  font-size: 28px;
  line-height: 40px;
}

h2, h3, p, dl, dd { margin: 0; font-size: inherit; font-weight: inherit; }
button, input, select { margin: 0; font: inherit; color: inherit; }
button { padding: 0; border: 0; background: none; cursor: pointer; }
a { color: inherit; text-decoration: none; }

.sprite { position: absolute; width: 0; height: 0; }
.icon { flex: none; display: block; width: 36px; height: 36px; fill: currentColor; }
.icon-sm { width: 32px; height: 32px; }
.icon-lg { width: 48px; height: 48px; }
.accent { color: var(--accent); }
.grow { flex: 1; min-width: 0; }
.push { margin-left: auto; }

/* Browser window */
.window {
  position: relative;
  display: flex;
  flex-direction: column;
  height: 100%;
  padding: 20px;
  border-radius: 22px;
  background: #d6c27b;
  box-shadow: 0 0 0 1px #111, 0 0 64px rgba(0, 0, 0, .16), 0 36px 56px rgba(0, 0, 0, .6);
}
.window::before {
  content: "";
  position: absolute;
  inset: 0;
  border-radius: inherit;
  background: #d6c27b;
  filter: url(#grain);
}
.toolbar {
  position: relative;
  display: flex;
  align-items: center;
  height: 80px;
  padding: 0 20px 0 38px;
  border-radius: 12px 12px 0 0;
  background: repeating-linear-gradient(45deg, #705e29 0 18px, #74622e 18px 48px, #705e29 48px 60px);
  box-shadow: inset 0 -2px #7f6d3e, 0 0 8px rgba(60, 40, 0, .4);
  color: #fbebc0;
}
.toolbar-info, .toolbar-url { font-family: "DejaVu Sans Mono", "Liberation Mono", monospace; }
.toolbar-info { width: 44px; font-size: 28px; font-weight: 700; }
.toolbar-url { font-size: 22px; color: #efe6cd; }
.toolbar-tools { display: flex; align-items: center; gap: 20px; margin-left: auto; }
.tool-sep { width: 2px; height: 40px; margin: 0 6px; background: #8f7b48; }
.tool-sep-wide { margin: 0 17px; }

/* App layout */
.app {
  position: relative;
  flex: 1;
  min-height: 0;
  display: grid;
  grid-template-columns: 736px minmax(0, 1fr) 736px;
  gap: 16px;
  padding: 0 16px;
  overflow: hidden;
  border-radius: 0 0 12px 12px;
  background: var(--base);
  box-shadow: 0 0 8px rgba(60, 40, 0, .4);
}
.panel { display: flex; flex-direction: column; gap: 16px; min-height: 0; padding-top: 16px; }
.card {
  flex: none;
  display: flex;
  flex-direction: column;
  gap: 16px;
  padding: 16px;
  border-radius: 16px;
  background: var(--surface);
  box-shadow: 0 8px 12px -2px rgba(0, 0, 0, .14), 0 4px 8px -4px rgba(0, 0, 0, .12);
}
.card-head { display: flex; align-items: center; gap: 16px; height: 40px; }
.card-head.tall { height: 48px; }
.title { color: var(--soft); font-weight: 600; letter-spacing: .1em; text-transform: uppercase; }
.row { display: flex; gap: 16px; }
.spread { justify-content: space-between; }
.plain { display: block; }

/* Buttons and fields */
.btn {
  display: flex;
  align-items: center;
  justify-content: center;
  gap: 16px;
  height: 64px;
  padding: 0 18px;
  border-radius: 12px;
  font-weight: 600;
}
.btn-primary { background: var(--accent); color: #fff; }
.btn-soft { background: var(--base); color: #4f5766; }
.btn-outline { border: 2px solid #f3f4f6; padding: 0 16px; color: #f3f4f6; }
.btn-disabled { background: #a0baf2; color: #f6f8fd; }
.btn-square { padding: 0 16px; box-shadow: 0 8px 12px -2px rgba(0, 0, 0, .14); }
.field {
  width: 100%;
  height: 64px;
  padding: 0 16px;
  border: 2px solid var(--line);
  border-radius: 8px;
  background: var(--surface);
}
.field::placeholder { color: #9ca3af; opacity: 1; }
.branch-label { display: flex; align-items: center; }
.select-wrap { position: relative; flex: 1; }
.select { appearance: none; }
.select-arrow { position: absolute; right: 8px; top: 27px; width: 18px; height: 10px; fill: none; stroke: currentColor; stroke-width: 2; pointer-events: none; }

/* Option groups */
.group { min-width: 0; margin: 0; padding: 16px; border: 2px solid var(--line); border-radius: 16px; }
.legend { display: flex; align-items: center; gap: 16px; height: 40px; margin-left: 12px; padding: 0; }
.options { display: flex; flex-wrap: wrap; }
.option {
  display: flex;
  align-items: center;
  gap: 16px;
  height: 52px;
  padding: 0 10px;
  border-radius: 16px;
  font-size: 24px;
  font-weight: 700;
}
.option.active { background: var(--accent); color: #fff; }
.option.faded { background: #80a3f1; }
.mark { fill: none; stroke: var(--surface); stroke-width: 2; }
.active .mark { stroke: var(--accent); }
.setting { display: flex; align-items: center; gap: 16px; height: 48px; padding: 0 6px 0 12px; font-weight: 600; }
.check {
  appearance: none;
  width: 36px;
  height: 36px;
  margin-left: auto;
  border: 4px solid var(--text);
  border-radius: 5px;
}
.check:checked::before {
  content: "";
  display: block;
  width: 28px;
  height: 28px;
  background: var(--text);
  clip-path: polygon(11% 51%, 20% 42%, 40% 62%, 80% 20%, 89% 29%, 40% 80%);
}
.setting:last-child { height: 44px; padding-right: 8px; }
.cutoff {
  width: 96px;
  height: 44px;
  margin-left: auto;
  padding: 0;
  border: 0;
  border-bottom: 4px solid var(--line);
  background: none;
  font-weight: 600;
}
.disclosure { display: flex; align-items: flex-start; gap: 16px; height: 40px; color: var(--soft); font-weight: 600; }

/* Chart */
.stage { display: flex; flex-direction: column; gap: 16px; min-width: 0; padding: 16px 0; }
.crumbs { display: flex; align-items: center; gap: 8px; height: 64px; font-size: 32px; font-weight: 600; }
.crumb-home {
  display: flex;
  align-items: center;
  gap: 16px;
  height: 64px;
  padding: 0 16px;
  border-radius: 16px;
  background: var(--surface);
  box-shadow: 0 8px 12px -2px rgba(0, 0, 0, .16);
}
.chart-card {
  position: relative;
  flex: 1;
  min-height: 0;
  border-radius: 16px;
  background: var(--surface);
  box-shadow: 0 4px 12px rgba(0, 0, 0, .12);
}
.chart { display: block; width: 100%; height: 100%; }
.ring { fill: none; stroke: var(--line); stroke-width: 2; }
.dots { fill: none; stroke-linecap: round; }
.d13 { stroke-width: 13px; }
.d18 { stroke-width: 18px; }
.d22 { stroke-width: 22px; }
.d26 { stroke-width: 26px; }
.d32 { stroke-width: 32px; }
.none { stroke: var(--none); }
.green { stroke: var(--green); }
.teal { stroke: var(--teal); }
.purple { stroke: var(--purple); }
.folder-names {
  fill: #333;
  font-family: "DejaVu Sans Mono", "Liberation Mono", monospace;
  font-size: 28px;
  font-weight: 700;
  text-anchor: middle;
}
.handle {
  position: absolute;
  top: 50%;
  display: grid;
  place-items: center;
  width: 48px;
  height: 48px;
  margin-top: -24px;
  border-radius: 50%;
  background: var(--accent);
  color: #fff;
}
.handle-left { left: -16px; }
.handle-right { right: -16px; }

/* File details */
.card-dark { background: #404040; color: #f3f4f6; }
.card-dark .card-head, .card-dark .title { color: #d0d1d4; }
.tabs { display: flex; }
.tab { flex: 1; height: 64px; border: 2px solid #949494; border-right: 0; border-radius: 12px 0 0 12px; color: #949494; font-weight: 600; }
.tab-on { border: 2px solid #f8f8f8; border-radius: 0 12px 12px 0; color: #f8f8f8; }
.facts { display: grid; grid-template-columns: auto 1fr; gap: 8px 24px; }
.facts dt { font-weight: 600; }
.fact-tall { display: flex; align-items: flex-start; height: 44px; line-height: 44px; }
.open-link { margin-left: auto; }
.well { display: flex; flex-direction: column; gap: 16px; padding: 16px; border-radius: 16px; background: #333; box-shadow: inset 0 4px 8px rgba(0, 0, 0, .06); }
.well-title { font-size: 32px; font-weight: 600; line-height: 48px; }
.body-text { font-size: 32px; line-height: 48px; }

/* Legend */
.muted { color: var(--soft); }
.author { display: flex; align-items: center; gap: 16px; height: 32px; font-weight: 600; }
.more { align-items: flex-end; line-height: 32px; }
.swatches { display: flex; }
.swatch { flex: none; width: 32px; height: 32px; border-radius: 50%; box-shadow: 0 2px 4px rgba(0, 0, 0, .6); }
.swatch + .swatch { margin-left: -16px; }
.green-bg { background: var(--green); }
.teal-bg { background: var(--teal); }
.purple-bg { background: var(--purple); }
.blue-bg { background: #4f7fbf; }
.none-bg { background: var(--none); }
.dark-bg { background: #404040; }

/* Support */
.support { padding-bottom: 28px; }
.gh { display: flex; height: 56px; color: #24292f; font-size: 24px; font-weight: 700; }
.gh-btn, .gh-count { display: flex; align-items: center; border: 2px solid #d5d8dc; }
.gh-btn { gap: 6px; padding: 0 20px; border-radius: 8px 0 0 8px; background: linear-gradient(#f6f8fa, #ebf0f4); }
.gh-count { padding: 0 20px; border-left: 0; border-radius: 0 8px 8px 0; background: #fff; }
```
